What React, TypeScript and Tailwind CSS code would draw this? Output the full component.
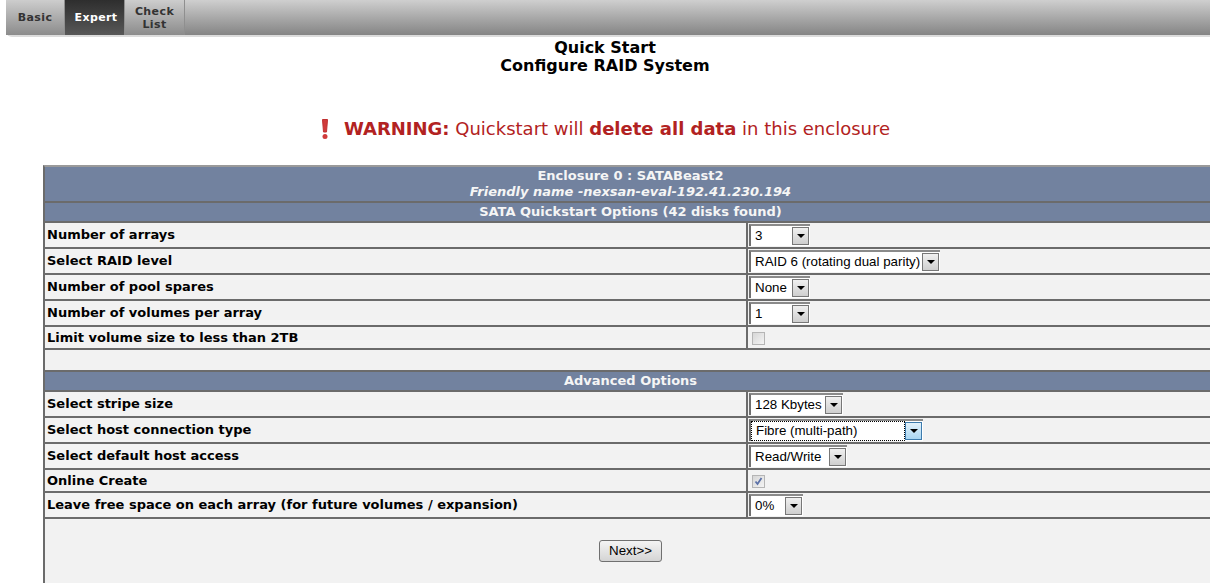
const verdana = "font-['DejaVu_Sans',sans-serif]";

const tabs = [
  { label: 'Basic', width: 'w-[59px]', active: false },
  { label: 'Expert', width: 'w-[60px]', active: true },
  { label: 'Check List', width: 'w-[60px]', active: false },
];

const quickstartRows = [
  { label: 'Number of arrays', value: '3', width: 'w-[61px]', h: 'h-[26px]' },
  { label: 'Select RAID level', value: 'RAID 6 (rotating dual parity)', width: 'w-[191px]', h: 'h-[26px]' },
  { label: 'Number of pool spares', value: 'None', width: 'w-[61px]', h: 'h-[26px]' },
  { label: 'Number of volumes per array', value: '1', width: 'w-[61px]', h: 'h-[26px]' },
  { label: 'Limit volume size to less than 2TB', check: false, h: 'h-[23px]' },
];

const advancedRows = [
  { label: 'Select stripe size', value: '128 Kbytes', width: 'w-[94px]', h: 'h-[26px]' },
  { label: 'Select host connection type', value: 'Fibre (multi-path)', width: 'w-[174px]', h: 'h-[26px]', focus: true },
  { label: 'Select default host access', value: 'Read/Write', width: 'w-[98px]', h: 'h-[26px]' },
  { label: 'Online Create', check: true, h: 'h-[23px]' },
  { label: 'Leave free space on each array (for future volumes / expansion)', value: '0%', width: 'w-[54px]', h: 'h-[26px]' },
];

type RowData = {
  label: string;
  value?: string;
  width?: string;
  h: string;
  focus?: boolean;
  check?: boolean;
};

function FakeSelect({ value, width, focus }: { value: string; width: string; focus?: boolean }) {
  return (
    <div className={`flex h-[22px] ${width} items-stretch border-t-2 border-l-2 border-t-[#8a8a8a] border-l-[#6f6f6f] bg-white font-['Liberation_Sans',sans-serif] text-[13.33px] text-black`}>
      <div className={`flex min-w-0 flex-1 items-center pl-[4px] whitespace-nowrap ${focus ? 'border border-dotted border-black pl-[3px]' : ''}`}>
        {value}
      </div>
      <div className={`my-px mr-px flex w-[17px] items-center justify-center border ${focus ? 'border-[#3d7bad] bg-gradient-to-b from-[#e3f2fb] to-[#a9d6f2]' : 'border-[#777777] bg-gradient-to-b from-[#f0f0f0] to-[#cfcfcf]'}`}>
        <svg width="8" height="4" viewBox="0 0 8 4">
          <path d="M0 0h8L4 4z" fill="#000" />
        </svg>
      </div>
    </div>
  );
}

function CheckBox({ checked }: { checked: boolean }) {
  return (
    <div className="ml-[3px] mt-[1px] flex h-[13px] w-[13px] items-center justify-center border border-[#b5b5b5] bg-gradient-to-br from-[#d6d6d6] to-[#f4f4f4]">
      {checked && (
        <svg width="9" height="9" viewBox="0 0 9 9">
          <path d="M1.5 4.5 3.5 7 7.5 1" fill="none" stroke="#5d72a8" strokeWidth="1.8" />
        </svg>
      )}
    </div>
  );
}

function Row({ row }: { row: RowData }) {
  return (
    <div className={`flex ${row.h} border-b-2 border-b-[#6b6b6b] bg-[#f2f2f2]`}>
      <div className={`flex w-[703px] items-center border-r-2 border-r-[#6b6b6b] pl-[2px] text-[13px] font-bold text-black ${verdana}`}>
        {row.label}
      </div>
      <div className="flex flex-1 items-center pl-[1px]">
        {row.value !== undefined ? (
          <FakeSelect value={row.value} width={row.width!} focus={row.focus} />
        ) : (
          <CheckBox checked={!!row.check} />
        )}
      </div>
    </div>
  );
}

function SectionHeader({ children, h }: { children: React.ReactNode; h: string }) {
  return (
    <div className={`flex ${h} flex-col items-center justify-center border-b-2 border-b-[#6b6b6b] bg-[#72829f] text-[13px] leading-[16px] font-bold text-[#f5f5f5] ${verdana}`}>
      {children}
    </div>
  );
}

export default function App() {
  return (
    <div className="h-[585px] w-[1210px] overflow-hidden bg-white">
      {/* Top nav bar */}
      <div className="ml-[6px] flex h-[37px] w-[1204px] rounded-bl-[6px] border-b-2 border-b-[#dcdcdc] bg-gradient-to-b from-[#cfcfcf] to-[#858585] pl-[0px] rounded-tl-[6px]">
        {tabs.map((tab) => (
          <div
            key={tab.label}
            className={`flex ${tab.width} items-center justify-center border-r border-r-[#8f8f8f] text-center text-[11px] leading-[13px] font-bold tracking-[0.4px] ${verdana} ${
              tab.active
                ? 'bg-gradient-to-b from-[#2e2e2e] to-[#585858] text-white'
                : 'bg-gradient-to-b from-[#cdcdcd] to-[#8c8c8c] text-[#333333]'
            }`}
          >
            <span className="w-[40px]">{tab.label}</span>
          </div>
        ))}
      </div>

      {/* Title */}
      <div className={`mt-[2px] text-center text-[16px] leading-[18px] font-bold text-black ${verdana}`}>
        <div>Quick Start</div>
        <div>Configure RAID System</div>
      </div>

      {/* Warning */}
      <div className={`mt-[42px] flex items-center justify-center text-[18px] leading-[24px] text-[#b22222] ${verdana}`}>
        <svg width="10" height="22" viewBox="0 0 10 22" className="mr-[14px]">
          <path d="M2.5 1.5h5L6.5 14h-3z" fill="#d03a3a" stroke="#c03030" strokeLinejoin="round" />
          <circle cx="5" cy="18.5" r="2.5" fill="#d03a3a" />
        </svg>
        <span>
          <b>WARNING:</b> Quickstart will <b>delete all data</b> in this enclosure
        </span>
      </div>

      {/* Main table */}
      <div className="mt-[24px] ml-[43px] w-[1173px] border-t-2 border-l-2 border-t-[#9a9a9a] border-l-[#6b6b6b]">
        <SectionHeader h="h-[36px]">
          <div>Enclosure 0 : SATABeast2</div>
          <div className="italic">Friendly name -nexsan-eval-192.41.230.194</div>
        </SectionHeader>
        <SectionHeader h="h-[20px]">SATA Quickstart Options (42 disks found)</SectionHeader>
        {quickstartRows.map((row) => (
          <Row key={row.label} row={row} />
        ))}
        <div className="h-[22px] border-b-2 border-b-[#6b6b6b] bg-[#f2f2f2]" />
        <SectionHeader h="h-[20px]">Advanced Options</SectionHeader>
        {advancedRows.map((row) => (
          <Row key={row.label} row={row} />
        ))}
        <div className="flex h-[64px] items-center justify-center bg-[#f2f2f2]">
          <button className="h-[22px] w-[63px] rounded-[3px] border border-[#707070] bg-gradient-to-b from-[#f4f4f4] to-[#d4d4d4] font-['Liberation_Sans',sans-serif] text-[13.33px] text-black">
            Next&gt;&gt;
          </button>
        </div>
      </div>
    </div>
  );
}
